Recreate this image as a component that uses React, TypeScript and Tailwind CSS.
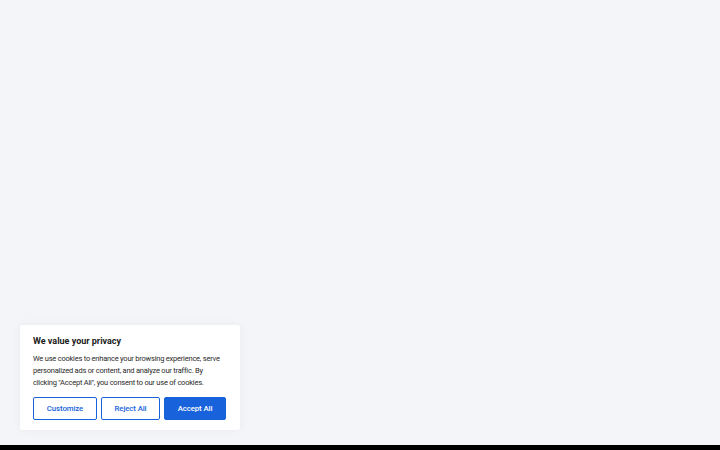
import React from "react";

export default function App() {
  return (
    <div className="relative flex h-[450px] w-full flex-col bg-[#f4f5f9] font-['Roboto',sans-serif]">
      <div className="flex-1" />
      <div className="h-[5px] w-full bg-black" />

      {/* cookie consent banner */}
      <div className="absolute bottom-[20px] left-[20px] w-[220px] rounded-[3px] bg-white px-[13px] pt-[10px] pb-[10px] shadow-[0_0_10px_rgba(0,0,0,0.05)]">
        <h2 className="text-[9px] leading-[12px] font-bold text-[#212121]">We value your privacy</h2>
        <p className="mt-[6px] text-[7.5px] leading-[12px] tracking-[-0.22px] text-[#2a2a2a]">
          We use cookies to enhance your browsing experience, serve personalized ads or content, and analyze our traffic. By clicking "Accept All", you consent to our use of cookies.
        </p>
        <div className="mt-[8px] flex gap-[4px]">
          <button className="h-[23px] w-[64px] rounded-[2px] border-[1.5px] border-[#1863dc] bg-white text-[7.8px] font-medium tracking-[-0.1px] text-[#1863dc]">
            Customize
          </button>
          <button className="h-[23px] w-[59px] rounded-[2px] border-[1.5px] border-[#1863dc] bg-white text-[7.8px] font-medium tracking-[-0.1px] text-[#1863dc]">
            Reject All
          </button>
          <button className="h-[23px] w-[62px] rounded-[2px] border-[1.5px] border-[#1863dc] bg-[#1863dc] text-[7.8px] font-medium tracking-[-0.1px] text-white">
            Accept All
          </button>
        </div>
      </div>
    </div>
  );
}
